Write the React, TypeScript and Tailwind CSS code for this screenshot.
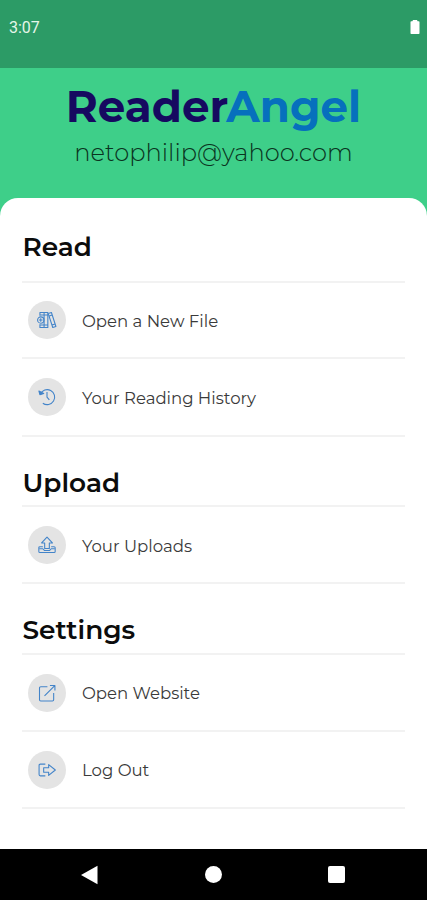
import React from 'react';

type IconProps = { className?: string };

const strokeProps = {
  viewBox: '0 0 24 24',
  fill: 'none',
  stroke: 'currentColor',
  strokeWidth: 1.3,
  strokeLinejoin: 'round' as const,
};

function BooksIcon({ className }: IconProps) {
  return (
    <svg {...strokeProps} className={className}>
      <path d="M3.5 7V3H13v18H3.5v-4M8.5 3v18M3.5 6H13M3.5 18H13" />
      <circle cx="4.5" cy="12" r="3.8" />
      <path d="M4.5 9.8v4.4M2.3 12h4.4M13.5 4.2l3.8-1.2 5.4 16.8-3.8 1.2L13.5 4.4M14.7 7.2l3.6-1.1M18 18l3.7-1.2" />
    </svg>
  );
}

function HistoryIcon({ className }: IconProps) {
  return (
    <svg {...strokeProps} className={className}>
      <path d="M4 8.5A9 9 0 1 1 7 19.5" />
      <path d="M2.3 4.8l1.2 4.4 4.6-1.4z" fill="currentColor" />
      <path d="M12 6v6.2l2.8 3.3" />
    </svg>
  );
}

function UploadIcon({ className }: IconProps) {
  return (
    <svg {...strokeProps} className={className}>
      <path d="M12 2.5L5.5 9.5h3.7v6.7h5.6V9.5h3.7z" />
      <path d="M7 14H3.5q-1.3 0-1.3 1.3v4.4q0 1.3 1.3 1.3h17q1.3 0 1.3-1.3v-4.4q0-1.3-1.3-1.3H17M3 16.5h4l1.8 2h6.4l1.8-2h4" />
    </svg>
  );
}

function ExternalIcon({ className }: IconProps) {
  return (
    <svg {...strokeProps} className={className}>
      <path d="M12.5 4.5h-8q-1.5 0-1.5 1.5v14q0 1.5 1.5 1.5h14q1.5 0 1.5-1.5v-8M9 15.5L21 3.5M15.5 3H21.5v6" />
    </svg>
  );
}

function LogoutIcon({ className }: IconProps) {
  return (
    <svg {...strokeProps} className={className}>
      <path d="M10 5H4Q2.5 5 2.5 6.5v11Q2.5 19 4 19h6M14 5.5v3.7H8v5.6h6v3.7L22 12z" />
    </svg>
  );
}

const sections = [
  {
    title: 'Read',
    heading: 'h-[85px] pt-[29px]',
    rows: [
      { label: 'Open a New File', icon: BooksIcon, height: 'h-[76px]', offset: 'mt-[2px]' },
      { label: 'Your Reading History', icon: HistoryIcon, height: 'h-[78px]', offset: 'mt-[3px]' },
    ],
  },
  {
    title: 'Upload',
    heading: 'h-[70px] pt-[26px]',
    rows: [{ label: 'Your Uploads', icon: UploadIcon, height: 'h-[77px]', offset: 'mt-[4px]' }],
  },
  {
    title: 'Settings',
    heading: 'h-[71px] pt-[26px]',
    rows: [
      { label: 'Open Website', icon: ExternalIcon, height: 'h-[77px]', offset: 'mt-[2px]' },
      { label: 'Log Out', icon: LogoutIcon, height: 'h-[77px]', offset: 'mt-[2px]' },
    ],
  },
];

export default function App() {
  return (
    <div className="flex h-[900px] w-[427px] flex-col overflow-hidden bg-[#3ecf89] font-['Montserrat','Inter',sans-serif]">
      {/* Status bar */}
      <div className="flex h-[68px] shrink-0 items-start justify-between bg-[#2c9b66] pt-[18px] pr-[7px] pl-[9px]">
        <span className="font-[Roboto,sans-serif] text-[16px] leading-5 text-[#e4f6e9]">3:07</span>
        <svg viewBox="0 0 10 14" className="mt-[2px] h-[14px] w-[10px]" fill="#fff">
          <path d="M3 0h4l.6 1.2h1.2q.7 0 .7.8v11.2q0 .8-.8.8H1.3q-.8 0-.8-.8V2q0-.8.7-.8h1.2z" />
        </svg>
      </div>

      {/* Brand */}
      <header className="flex h-[130px] shrink-0 flex-col items-center whitespace-nowrap pt-[14px]">
        <h1 className="text-[43.6px] leading-[50px] font-bold text-[#160960]">
          Reader<span className="text-[#0670bd]">Angel</span>
        </h1>
        <p className="mt-[4px] text-[24.2px] leading-[34px] font-light text-[#0a3320]">netophilip@yahoo.com</p>
      </header>

      <main className="flex-1 rounded-t-[18px] bg-white px-[22px]">
        {sections.map(section => (
          <section key={section.title}>
            <h2
              className={`border-b-2 border-[#f2f2f2] pl-[0.5px] text-[26.4px] leading-10 font-semibold text-[#0c0c0c] ${section.heading}`}
            >
              {section.title}
            </h2>
            {section.rows.map(row => {
              const Icon = row.icon;
              return (
                <button
                  key={row.label}
                  className={`flex w-full items-center border-b-2 border-[#f2f2f2] pl-[6px] text-left ${row.height}`}
                >
                  <span className="flex size-[38px] items-center justify-center rounded-full bg-[#e4e4e4]">
                    <Icon className="size-5 text-[#4384c9]" />
                  </span>
                  <span className={`ml-[16px] text-[16.55px] text-[#3a3a3a] ${row.offset}`}>{row.label}</span>
                </button>
              );
            })}
          </section>
        ))}
      </main>

      {/* Android navigation */}
      <nav className="flex h-[51px] shrink-0 items-center justify-between bg-black pr-[82px] pl-[81px]">
        <svg viewBox="0 0 18 20" className="h-5 w-[18px]" fill="#fff">
          <path d="M0 10L16.5.8v18.4z" />
        </svg>
        <span className="size-[17px] rounded-full bg-white" />
        <span className="size-[17px] rounded-[2px] bg-white" />
      </nav>
    </div>
  );
}
